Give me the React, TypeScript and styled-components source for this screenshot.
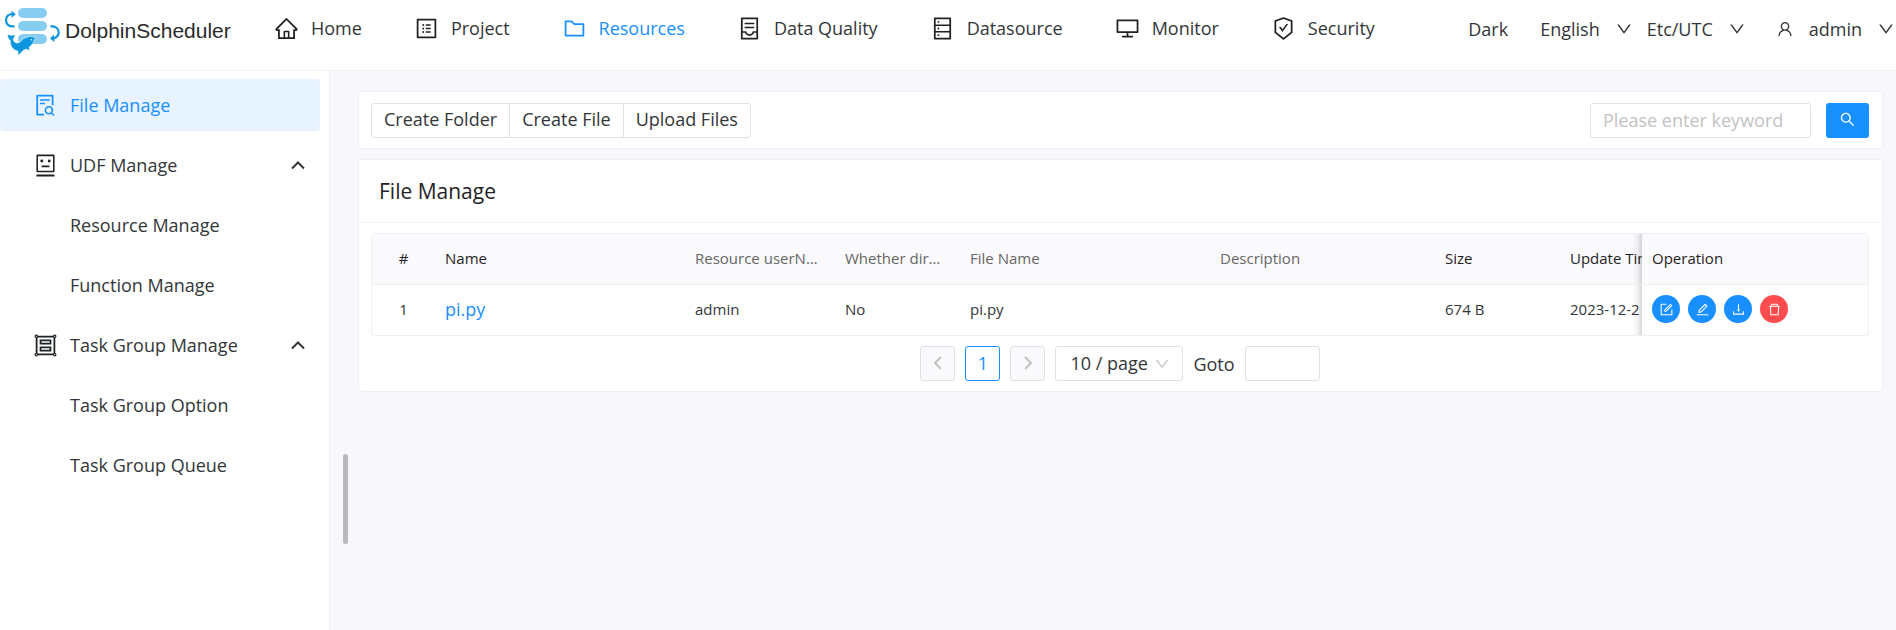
import React from 'react';
import styled, { createGlobalStyle, css } from 'styled-components';
import {
  AiOutlineHome,
  AiOutlineProfile,
  AiOutlineFolder,
  AiOutlineContainer,
  AiOutlineDatabase,
  AiOutlineDesktop,
  AiOutlineSafetyCertificate,
  AiOutlineDown,
  AiOutlineUser,
  AiOutlineSearch,
  AiOutlineFileSearch,
  AiOutlineRobot,
  AiOutlineGroup,
  AiOutlineForm,
  AiOutlineEdit,
  AiOutlineDownload,
  AiOutlineDelete,
} from 'react-icons/ai';
import type { IconType } from 'react-icons';

const color = {
  primary: '#1890ff',
  danger: '#ff4d4f',
  text: '#333639',
  title: '#1f2225',
  muted: '#666666',
  placeholder: '#c2c2c2',
  border: '#e0e0e6',
  divider: '#efeff5',
  page: '#f8f8fc',
  tableHead: '#fafafc',
};

const GlobalStyle = createGlobalStyle`
  * { box-sizing: border-box; }
  body {
    margin: 0;
    background: ${color.page};
    color: ${color.text};
    font-family: 'Open Sans', 'Noto Sans', sans-serif;
    font-size: 18px;
    line-height: 28px;
  }
  a { color: inherit; text-decoration: none; }
  button, input, select { font: inherit; color: inherit; margin: 0; }
  button { cursor: pointer; }
`;

const Page = styled.div`
  display: flex;
  flex-direction: column;
  min-height: 100vh;
`;

const Header = styled.header`
  display: flex;
  justify-content: space-between;
  height: 71px;
  padding-bottom: 14px;
  background: #fff;
  border-bottom: 1px solid ${color.divider};
`;

const HeaderLeft = styled.div`
  display: flex;
  align-items: center;
`;

const Brand = styled.a`
  display: flex;
  align-items: center;
  gap: 5px;
  width: 249px;
  padding: 5px 0 0 4px;
  color: #2b2b2b;
  font-family: 'Liberation Sans', Arial, sans-serif;
  font-size: 21px;
`;

const Nav = styled.nav`
  display: flex;
`;

const NavLink = styled.a<{ $active?: boolean }>`
  display: flex;
  align-items: center;
  gap: 12px;
  padding: 0 27px 0 25px;
  color: ${(p) => (p.$active ? color.primary : color.text)};
  svg { color: ${(p) => (p.$active ? color.primary : color.title)}; }
`;

const HeaderRight = styled.div`
  display: flex;
  align-items: center;
  padding: 2px 1px 0 0;
`;

const HeaderButton = styled.button<{ $gap?: number }>`
  display: flex;
  align-items: center;
  gap: 15px;
  padding: 0;
  margin-left: ${(p) => p.$gap ?? 14}px;
  border: 0;
  background: none;
`;

const Body = styled.div`
  display: flex;
  flex: 1;
`;

const Sidebar = styled.aside`
  flex: none;
  width: 330px;
  padding: 8px 9px 8px 0;
  background: #fff;
  border-right: 1px solid ${color.divider};
`;

const Menu = styled.ul`
  display: flex;
  flex-direction: column;
  gap: 8px;
  margin: 0;
  padding: 0;
  list-style: none;
`;

const menuRow = css`
  display: flex;
  align-items: center;
  gap: 12px;
  width: 100%;
  height: 52px;
  padding: 0 14px 0 33px;
  border: 0;
  border-radius: 4px;
  background: none;
  text-align: left;
`;

const MenuLink = styled.a<{ $active?: boolean; $nested?: boolean }>`
  ${menuRow}
  ${(p) => p.$nested && 'padding-left: 70px;'}
  ${(p) => p.$active && `background: #e7f3ff; color: ${color.primary};`}
`;

const MenuToggle = styled.button`
  ${menuRow}
  > svg:first-child { color: ${color.title}; }
  > svg:last-child { margin-left: auto; }
`;

const Main = styled.main`
  position: relative;
  display: flex;
  flex: 1;
  flex-direction: column;
  gap: 10px;
  min-width: 0;
  padding: 20px 13px 20px 28px;
`;

const ScrollThumb = styled.div`
  position: absolute;
  top: 383px;
  left: 13px;
  width: 5px;
  height: 90px;
  border-radius: 3px;
  background: #b9b9bc;
`;

const Card = styled.section`
  background: #fff;
  border: 1px solid ${color.divider};
  border-radius: 3px;
`;

const Toolbar = styled(Card)`
  display: flex;
  align-items: center;
  justify-content: space-between;
  padding: 11px 13px 10px 12px;
`;

const ButtonGroup = styled.div`
  display: flex;
`;

const GroupButton = styled.button`
  height: 35px;
  padding: 0 12px 4px;
  border: 1px solid ${color.border};
  background: #fff;
  line-height: 28px;
  & + & { margin-left: -1px; }
  &:first-child { border-radius: 3px 0 0 3px; }
  &:last-child { border-radius: 0 3px 3px 0; }
`;

const Search = styled.form`
  display: flex;
  gap: 15px;
`;

const TextInput = styled.input<{ $width: number }>`
  width: ${(p) => p.$width}px;
  height: 35px;
  padding: 0 12px 2px;
  border: 1px solid ${color.border};
  border-radius: 3px;
  background: #fff;
  &::placeholder { color: ${color.placeholder}; opacity: 1; }
`;

const SearchButton = styled.button`
  display: grid;
  place-items: center;
  width: 43px;
  height: 35px;
  padding: 0 0 2px;
  border: 0;
  border-radius: 3px;
  background: ${color.primary};
  color: #fff;
`;

const CardTitle = styled.h1`
  margin: 0;
  padding: 17px 20px;
  border-bottom: 1px solid ${color.divider};
  color: ${color.title};
  font-size: 21px;
  font-weight: 400;
  line-height: 28px;
`;

const CardBody = styled.div`
  display: flex;
  flex-direction: column;
  gap: 10px;
  padding: 10px 13px 10px 12px;
`;

const TableScroll = styled.div`
  overflow-x: auto;
  border: 1px solid ${color.divider};
  border-radius: 3px;
  scrollbar-width: none;
`;

const Table = styled.table`
  width: 100%;
  min-width: 1638px;
  table-layout: fixed;
  border-collapse: separate;
  border-spacing: 0;
  font-size: 15px;
  line-height: 24px;
`;

const cell = css<{ $center?: boolean; $fixed?: boolean }>`
  padding: 0 ${(p) => (p.$center ? 10 : 14)}px 2px 10px;
  overflow: hidden;
  text-align: ${(p) => (p.$center ? 'center' : 'left')};
  text-overflow: ellipsis;
  white-space: nowrap;
  ${(p) =>
    p.$fixed &&
    css`
      position: sticky;
      right: 0;
      overflow: visible;
      &::before {
        content: '';
        position: absolute;
        top: 0;
        bottom: 0;
        left: -10px;
        width: 10px;
        background: linear-gradient(to right, transparent, rgba(0, 0, 0, 0.04) 50%, rgba(0, 0, 0, 0.15));
      }
    `}
`;

const HeadCell = styled.th<{ $center?: boolean; $fixed?: boolean; $muted?: boolean }>`
  ${cell}
  height: 51px;
  border-bottom: 1px solid ${color.divider};
  background: ${color.tableHead};
  color: ${(p) => (p.$muted ? color.muted : color.title)};
  font-weight: 400;
`;

const DataCell = styled.td<{ $center?: boolean; $fixed?: boolean }>`
  ${cell}
  height: 50px;
  background: #fff;
`;

const FileLink = styled.a`
  color: ${color.primary};
  font-size: 18px;
`;

const Actions = styled.div`
  display: flex;
  gap: 8px;
`;

const RoundButton = styled.button<{ $danger?: boolean }>`
  display: grid;
  place-items: center;
  width: 28px;
  height: 28px;
  padding: 0;
  border: 0;
  border-radius: 50%;
  background: ${(p) => (p.$danger ? color.danger : color.primary)};
  color: #fff;
`;

const Pagination = styled.div`
  display: flex;
  align-items: center;
  justify-content: center;
  gap: 10px;
`;

const PageButton = styled.button<{ $active?: boolean }>`
  display: grid;
  place-items: center;
  width: 35px;
  height: 35px;
  padding: 0 0 1px;
  border: 1px solid ${(p) => (p.$active ? color.primary : color.border)};
  border-radius: 3px;
  background: ${(p) => (p.$active ? '#fff' : color.tableHead)};
  color: ${(p) => (p.$active ? color.primary : color.placeholder)};
`;

const SelectBox = styled.div`
  display: grid;
  align-items: center;
  > * { grid-area: 1 / 1; }
  > svg {
    justify-self: end;
    margin-right: 13px;
    color: ${color.placeholder};
    pointer-events: none;
  }
`;

const Select = styled.select`
  width: 128px;
  height: 35px;
  padding: 0 14px 2px;
  border: 1px solid ${color.border};
  border-radius: 3px;
  background: #fff;
  appearance: none;
`;

const Goto = styled.label`
  display: flex;
  align-items: center;
  gap: 10px;
`;

const Chevron = ({ dir, size, stroke }: { dir: 'up' | 'left' | 'right'; size: number; stroke: number }) => {
  const d = { up: 'M2 11.5 8 5.5l6 6', left: 'M11 2 5 8l6 6', right: 'M5 2l6 6-6 6' }[dir];
  return (
    <svg width={size} height={size} viewBox="0 0 16 16" fill="none" stroke="currentColor" strokeWidth={stroke} aria-hidden>
      <path d={d} />
    </svg>
  );
};

const Logo = () => (
  <svg width="56" height="50" viewBox="4 5 56 50" aria-hidden>
    <g fill="#87cdf1">
      <rect x="18" y="7" width="29" height="10" rx="5" />
      <rect x="18" y="20" width="29" height="10" rx="5" />
      <rect x="18" y="33" width="29" height="10" rx="5" />
    </g>
    <g fill="none" stroke="#0d96df" strokeWidth="2.2">
      <path d="M14.5 25.4C8.5 26 5.8 22.600 6 19.200 6.200 15.500 8.600 13.300 12 13" />
      <path d="M50.500 25.200c5 .2 8.200 2.600 8.200 6 0 3.400-2 5.400-5.600 6.200" />
    </g>
    <path fill="#0d96df" d="M11.500 9.800 15.800 13.200 11.500 16.800zM54 33.600l-4 3.800 4.400 3.600z" />
    <path
      fill="#0d96df"
      stroke="#fff"
      strokeWidth="0.500"
      d="M7.600 33.200c1.500.5 2.600.9 3.800 1.300.9-.5 2.200-.7 3.600-.2-.2 1.600-.9 2.700-2 3.600.5 2.600 2.200 4.200 4.500 4.100 1.700-.2 3-1.200 4.300-2.500.8-1.400 2.300-2.500 4.400-2.800l2-.9c1.800-.6 4.300-.4 5.900.6l2.300.3c-.3 1-1.200 1.400-2.100 1.700-.6 3-2.600 5.900-5.200 7.900l.5 3.500-3.100-1.700c-1.500.6-2.900 1-3.800 1.800-1.400 1.200-2.300 3-4.400 4.100-.4-1.200-.6-2.600-.3-4C13.300 49.500 10.200 45.500 10.300 39.500 8.300 38 7.400 35.800 7.600 33.200z"
    />
    <circle cx="31.500" cy="38.800" r=".7" fill="#fff" />
  </svg>
);

const navItems: { label: string; icon: IconType; active?: boolean }[] = [
  { label: 'Home', icon: AiOutlineHome },
  { label: 'Project', icon: AiOutlineProfile },
  { label: 'Resources', icon: AiOutlineFolder, active: true },
  { label: 'Data Quality', icon: AiOutlineContainer },
  { label: 'Datasource', icon: AiOutlineDatabase },
  { label: 'Monitor', icon: AiOutlineDesktop },
  { label: 'Security', icon: AiOutlineSafetyCertificate },
];

const menuGroups: { label: string; icon: IconType; items: string[] }[] = [
  { label: 'UDF Manage', icon: AiOutlineRobot, items: ['Resource Manage', 'Function Manage'] },
  { label: 'Task Group Manage', icon: AiOutlineGroup, items: ['Task Group Option', 'Task Group Queue'] },
];

const columns: { label: string; width?: number; center?: boolean; muted?: boolean; fixed?: boolean }[] = [
  { label: '#', width: 63, center: true },
  { label: 'Name', width: 250 },
  { label: 'Resource userName', width: 150, muted: true },
  { label: 'Whether directory', width: 125, muted: true },
  { label: 'File Name', width: 250, muted: true },
  { label: 'Description', width: 225, muted: true },
  { label: 'Size', width: 125 },
  { label: 'Update Time' },
  { label: 'Operation', width: 226, fixed: true },
];

const actions: { label: string; icon: IconType; danger?: boolean }[] = [
  { label: 'Edit', icon: AiOutlineForm },
  { label: 'Rename', icon: AiOutlineEdit },
  { label: 'Download', icon: AiOutlineDownload },
  { label: 'Delete', icon: AiOutlineDelete, danger: true },
];

export default function App() {
  return (
    <Page>
      <GlobalStyle />
      <Header>
        <HeaderLeft>
          <Brand href="#">
            <Logo />
            DolphinScheduler
          </Brand>
          <Nav>
            {navItems.map(({ label, icon: Icon, active }) => (
              <NavLink key={label} href="#" $active={active}>
                <Icon size={25} />
                {label}
              </NavLink>
            ))}
          </Nav>
        </HeaderLeft>
        <HeaderRight>
          <HeaderButton>Dark</HeaderButton>
          <HeaderButton $gap={32}>
            English
            <AiOutlineDown size={18} />
          </HeaderButton>
          <HeaderButton>
            Etc/UTC
            <AiOutlineDown size={18} />
          </HeaderButton>
          <HeaderButton $gap={30}>
            <AiOutlineUser size={18} />
            admin
            <AiOutlineDown size={18} />
          </HeaderButton>
        </HeaderRight>
      </Header>
      <Body>
        <Sidebar>
          <Menu>
            <li>
              <MenuLink href="#" $active>
                <AiOutlineFileSearch size={25} />
                File Manage
              </MenuLink>
            </li>
            {menuGroups.map(({ label, icon: Icon, items }) => (
              <React.Fragment key={label}>
                <li>
                  <MenuToggle aria-expanded="true">
                    <Icon size={25} />
                    {label}
                    <Chevron dir="up" size={16} stroke={2} />
                  </MenuToggle>
                </li>
                {items.map((item) => (
                  <li key={item}>
                    <MenuLink href="#" $nested>
                      {item}
                    </MenuLink>
                  </li>
                ))}
              </React.Fragment>
            ))}
          </Menu>
        </Sidebar>
        <Main>
          <ScrollThumb />
          <Toolbar>
            <ButtonGroup>
              <GroupButton>Create Folder</GroupButton>
              <GroupButton>Create File</GroupButton>
              <GroupButton>Upload Files</GroupButton>
            </ButtonGroup>
            <Search onSubmit={(e) => e.preventDefault()}>
              <TextInput $width={221} type="text" placeholder="Please enter keyword" aria-label="Keyword" />
              <SearchButton aria-label="Search">
                <AiOutlineSearch size={17} />
              </SearchButton>
            </Search>
          </Toolbar>
          <Card>
            <CardTitle>File Manage</CardTitle>
            <CardBody>
              <TableScroll>
                <Table>
                  <colgroup>
                    {columns.map((c) => (
                      <col key={c.label} width={c.width} />
                    ))}
                  </colgroup>
                  <thead>
                    <tr>
                      {columns.map((c) => (
                        <HeadCell key={c.label} scope="col" $center={c.center} $muted={c.muted} $fixed={c.fixed}>
                          {c.label}
                        </HeadCell>
                      ))}
                    </tr>
                  </thead>
                  <tbody>
                    <tr>
                      <DataCell $center>1</DataCell>
                      <DataCell>
                        <FileLink href="#">pi.py</FileLink>
                      </DataCell>
                      <DataCell>admin</DataCell>
                      <DataCell>No</DataCell>
                      <DataCell>pi.py</DataCell>
                      <DataCell />
                      <DataCell>674 B</DataCell>
                      <DataCell>2023-12-2</DataCell>
                      <DataCell $fixed>
                        <Actions>
                          {actions.map(({ label, icon: Icon, danger }) => (
                            <RoundButton key={label} aria-label={label} $danger={danger}>
                              <Icon size={15} />
                            </RoundButton>
                          ))}
                        </Actions>
                      </DataCell>
                    </tr>
                  </tbody>
                </Table>
              </TableScroll>
              <Pagination>
                <PageButton disabled aria-label="Previous page">
                  <Chevron dir="left" size={16} stroke={2} />
                </PageButton>
                <PageButton $active>1</PageButton>
                <PageButton disabled aria-label="Next page">
                  <Chevron dir="right" size={16} stroke={2} />
                </PageButton>
                <SelectBox>
                  <Select aria-label="Page size" defaultValue="10">
                    <option value="10">10 / page</option>
                    <option value="30">30 / page</option>
                    <option value="50">50 / page</option>
                  </Select>
                  <AiOutlineDown size={16} />
                </SelectBox>
                <Goto>
                  Goto
                  <TextInput $width={75} type="text" />
                </Goto>
              </Pagination>
            </CardBody>
          </Card>
        </Main>
      </Body>
    </Page>
  );
}
